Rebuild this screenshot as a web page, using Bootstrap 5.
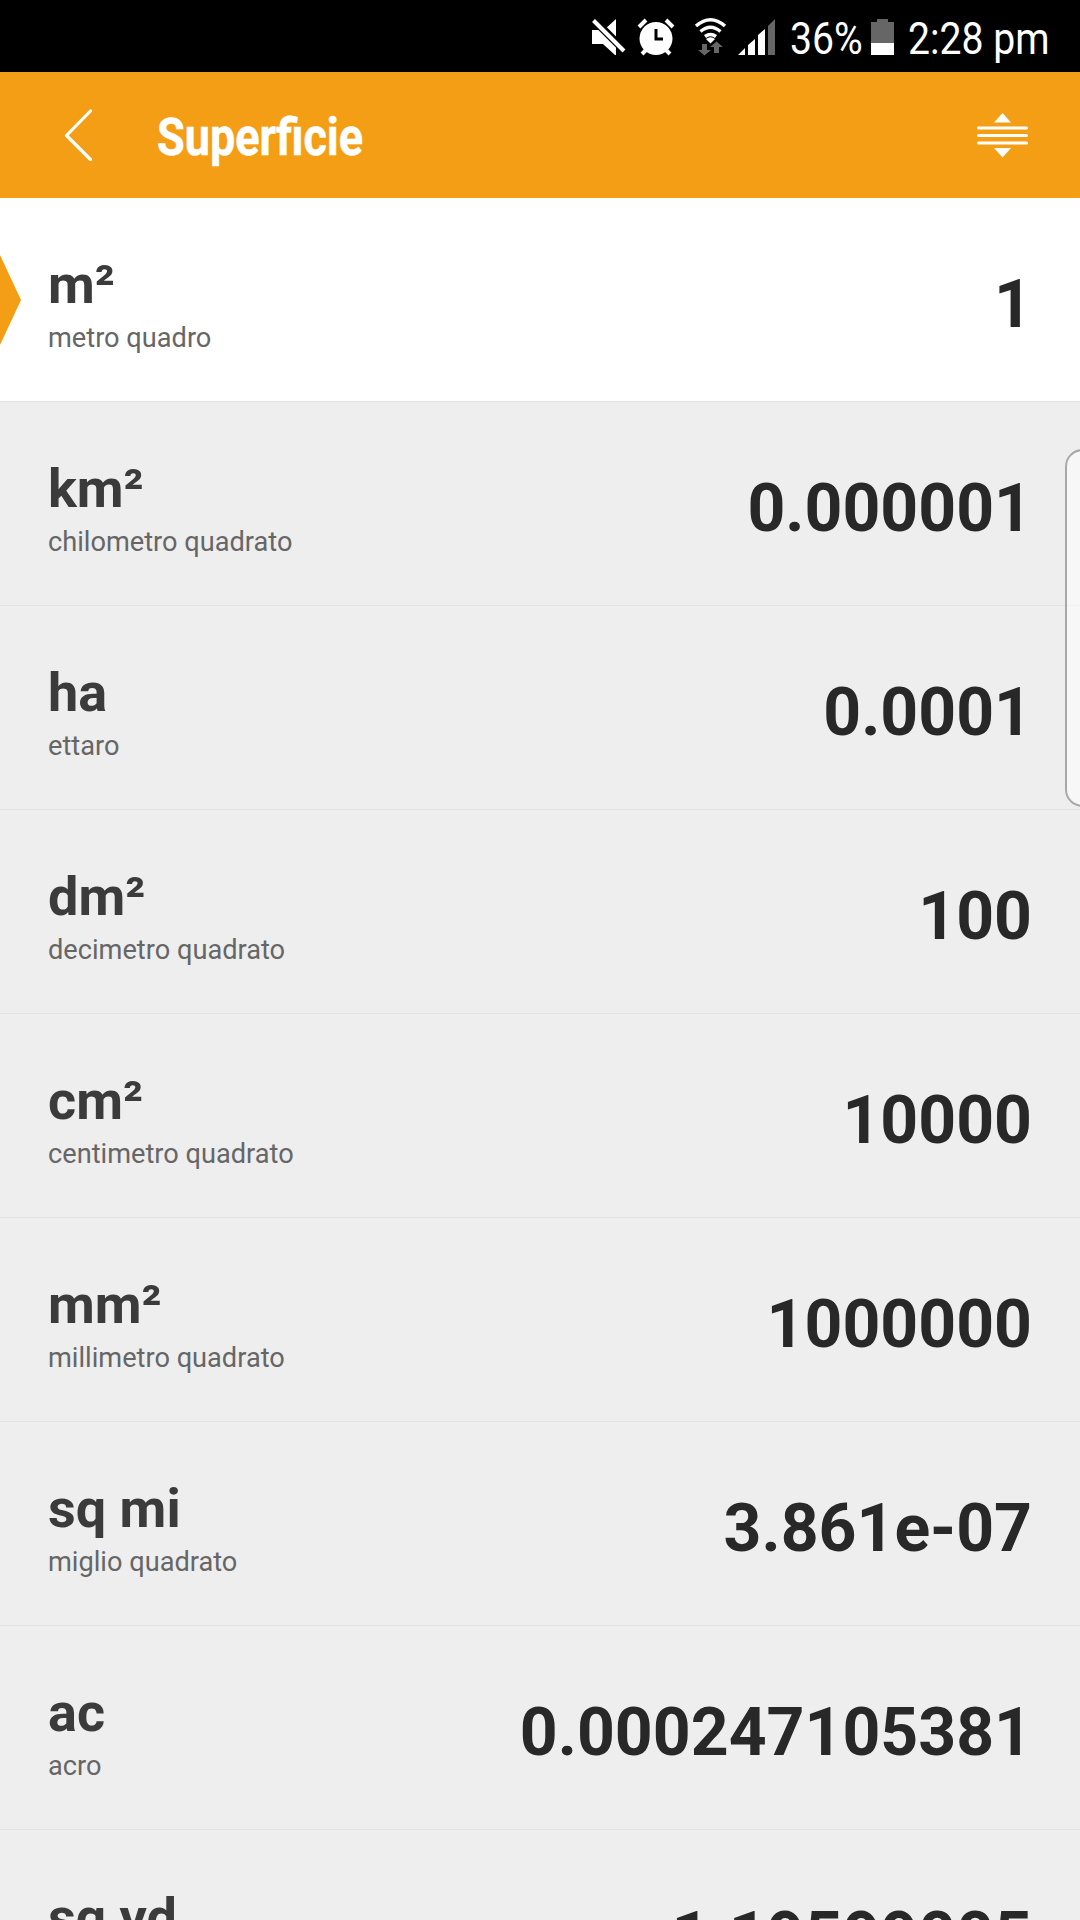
<!DOCTYPE html>
<html lang="it">
<head>
<meta charset="utf-8">
<meta name="viewport" content="width=device-width, initial-scale=1">
<title>Superficie</title>
<link href="https://cdn.jsdelivr.net/npm/bootstrap@5.3.0/dist/css/bootstrap.min.css" rel="stylesheet">
<style>
body{font-family:Roboto,"Liberation Sans",sans-serif;background:#eee;height:1920px;overflow:hidden}
.status{height:72px;background:#000;padding-right:32px}
.status svg{display:block}
.clock-text{font-size:45px;line-height:72px;height:72px;white-space:nowrap;transform-origin:0 50%;transform:scaleX(.87);padding-top:3px}
.pct{width:80px;margin-left:1px}
.time{width:140px}
.topbar{height:126px;background:#f49e16;padding:0 52px 0 64px}
.heading{font-size:51px;line-height:60px;font-weight:700;margin:6px 0 0 65px;transform:scaleX(.882);transform-origin:0 50%;-webkit-text-stroke:.5px #fff}
.units{min-height:0}
.unit{height:204px;padding:0 48px;border:0;border-bottom:2px solid #e3e3e3;border-radius:0;background:#eee;flex:none}
.unit.current{background:#fff}
.pointer{left:0;top:57px;width:21px;height:90px;background:#f49e16;clip-path:polygon(0 0,100% 50%,0 100%)}
.labels{padding-top:8px}
.symbol{font-size:54px;line-height:64px;font-weight:700;color:#3b3b3b}
.unit-name{font-size:27.2px;line-height:32px;height:32px;color:#666;margin-top:5px}
.amount{font-size:66.1px;line-height:78px;font-weight:700;color:#282828;padding-top:10px}
.edge-panel{right:-20px;top:449px;width:35px;height:358px;border:2px solid #a8a8a8;border-radius:20px;background:rgba(255,255,255,.5)}
</style>
<script src="https://cdn.jsdelivr.net/npm/bootstrap@5.3.0/dist/js/bootstrap.bundle.min.js"></script>
</head>
<body class="position-relative d-flex flex-column m-0">
<div class="status d-flex justify-content-end flex-shrink-0 text-white">
  <svg width="199" height="72" viewBox="590 0 199 72" fill="#fff">
    <path d="M592 30h12l12-11v36h-1L603 44h-11z"/>
    <path d="M590 16L627 53" stroke="#000" stroke-width="8"/>
    <path d="M593.5 20.500L624 51" stroke="#fff" stroke-width="4"/>
    <circle cx="656" cy="38.500" r="16.500"/>
    <path d="M639 27l7-7M673 27l-7-7M642 54l5-5M670 54l-5-5" stroke="#fff" stroke-width="4"/>
    <path d="M656 29v10h7" fill="none" stroke="#000" stroke-width="3"/>
    <g fill="none" stroke="#fff" stroke-width="3.500"><path d="M696 26q14.500-12.500 29 0M700.500 31.500q10-8.500 20 0M705 36.500q5.500-4 11 0"/></g>
    <path d="M706 39q4.500-3.500 9 0l-4.500 4.500z"/>
    <path fill="#666" d="M702 44h5v6h4l-6.500 5.500L698 50h4zM714 53v-6h-4l6.500-5.500L723 47h-4v6z"/>
    <path d="M738 55l7-7v7zM748 55V45l7-6v16zM758 55V35l7-6v26z"/>
    <path fill="#666" d="M768 55V26l7-7v36z"/>
  </svg>
  <div class="pct"><div class="clock-text">36%</div></div>
  <svg width="38" height="72" viewBox="870 0 38 72"><path fill="#666" d="M871 22h6v-3h11v3h6v21h-23z"/><path fill="#fff" d="M871 43h23v12h-23z"/></svg>
  <div class="time"><div class="clock-text">2:28 pm</div></div>
</div>
<header class="topbar d-flex align-items-center flex-shrink-0 text-white">
  <svg width="28" height="52" viewBox="0 0 28 52" fill="none" stroke="#fff" stroke-width="3.200" stroke-linecap="round" stroke-linejoin="round"><path d="M26.500 2L2.500 26.500L26.500 50.500"/></svg>
  <h1 class="heading">Superficie</h1>
  <svg class="ms-auto" width="51" height="46" viewBox="0 0 51 46" fill="#fff"><path d="M17 10.500L25.500 1L34 10.500zM17 36L25.500 45.500L34 36z"/><path d="M1.500 16h48M1.500 23.500h48M1.500 31h48" stroke="#fff" stroke-width="3" stroke-linecap="round"/></svg>
</header>
<main class="list-group list-group-flush rounded-0 flex-fill overflow-hidden units">
  <div class="list-group-item unit current position-relative d-flex align-items-center justify-content-between"><span class="pointer position-absolute"></span><div class="labels"><div class="symbol">m²</div><div class="unit-name">metro quadro</div></div><div class="amount">1</div></div>
  <div class="list-group-item unit d-flex align-items-center justify-content-between"><div class="labels"><div class="symbol">km²</div><div class="unit-name">chilometro quadrato</div></div><div class="amount">0.000001</div></div>
  <div class="list-group-item unit d-flex align-items-center justify-content-between"><div class="labels"><div class="symbol">ha</div><div class="unit-name">ettaro</div></div><div class="amount">0.0001</div></div>
  <div class="list-group-item unit d-flex align-items-center justify-content-between"><div class="labels"><div class="symbol">dm²</div><div class="unit-name">decimetro quadrato</div></div><div class="amount">100</div></div>
  <div class="list-group-item unit d-flex align-items-center justify-content-between"><div class="labels"><div class="symbol">cm²</div><div class="unit-name">centimetro quadrato</div></div><div class="amount">10000</div></div>
  <div class="list-group-item unit d-flex align-items-center justify-content-between"><div class="labels"><div class="symbol">mm²</div><div class="unit-name">millimetro quadrato</div></div><div class="amount">1000000</div></div>
  <div class="list-group-item unit d-flex align-items-center justify-content-between"><div class="labels"><div class="symbol">sq mi</div><div class="unit-name">miglio quadrato</div></div><div class="amount">3.861e-07</div></div>
  <div class="list-group-item unit d-flex align-items-center justify-content-between"><div class="labels"><div class="symbol">ac</div><div class="unit-name">acro</div></div><div class="amount">0.000247105381</div></div>
  <div class="list-group-item unit d-flex align-items-center justify-content-between"><div class="labels"><div class="symbol">sq yd</div><div class="unit-name"></div></div><div class="amount">1.19599005</div></div>
</main>
<aside class="edge-panel position-absolute"></aside>
</body>
</html>
